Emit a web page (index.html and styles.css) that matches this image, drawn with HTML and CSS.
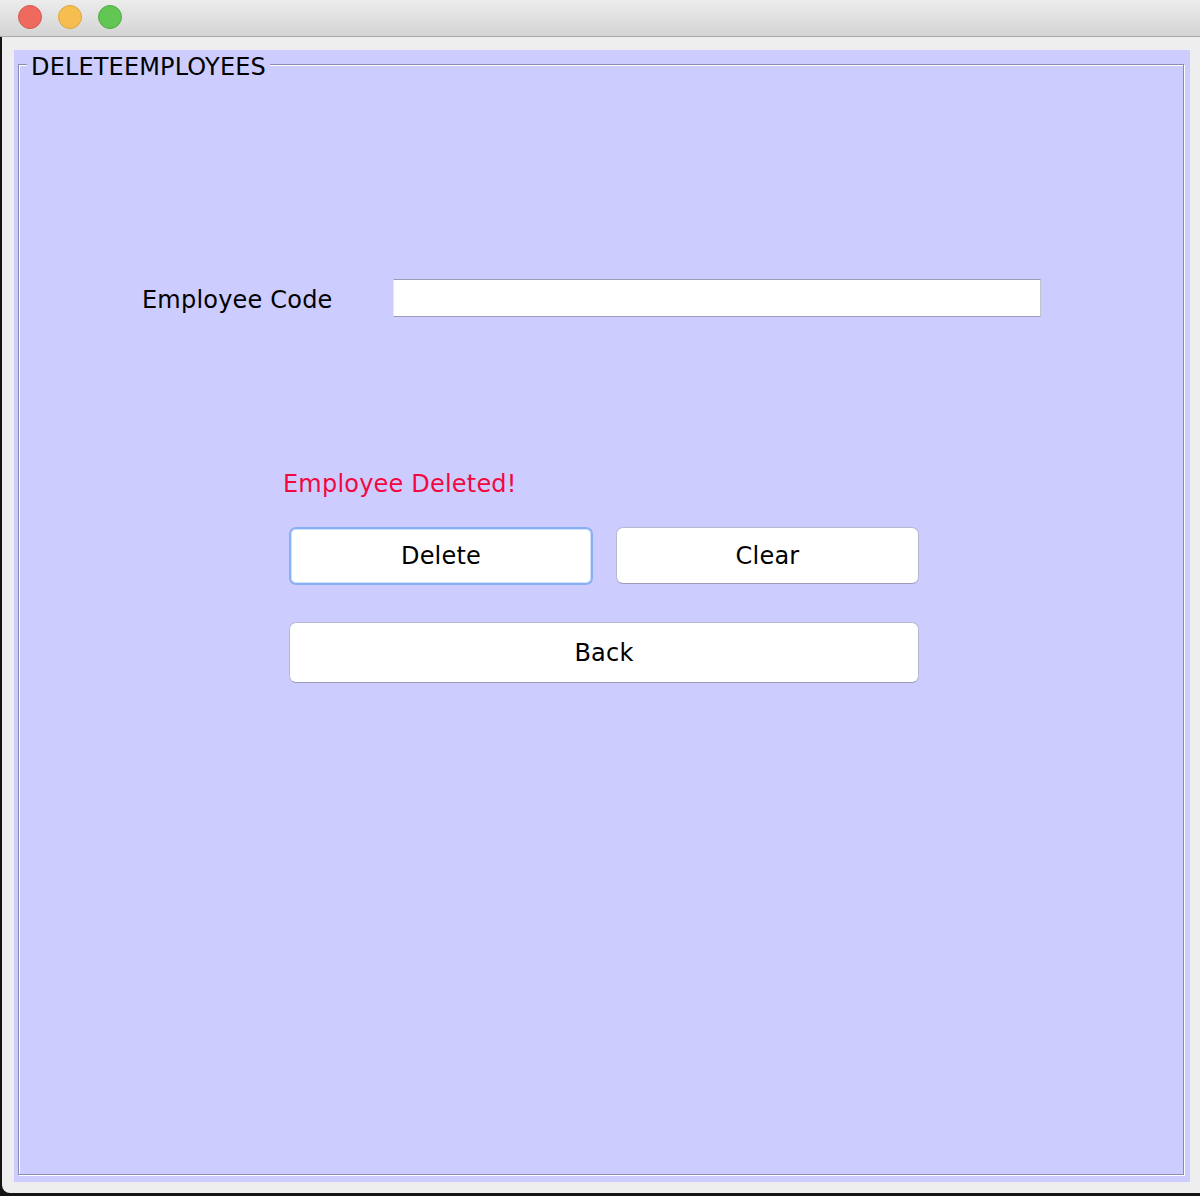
FILE: index.html
```html
<!DOCTYPE html>
<html lang="en">
<head>
<meta charset="utf-8">
<title>Delete Employees</title>
<link rel="stylesheet" href="styles.css">
</head>
<body>
<div class="window">
  <div class="titlebar">
    <span class="light light-red"></span>
    <span class="light light-yellow"></span>
    <span class="light light-green"></span>
  </div>
  <div class="content">
    <div class="panel">
      <fieldset class="group">
        <legend class="group-title">DELETEEMPLOYEES</legend>
        <div class="form">
          <div class="field-row">
            <label class="field-label" for="code">Employee Code</label>
            <input class="field-input" id="code" type="text">
          </div>
          <div class="actions">
            <p class="status">Employee Deleted!</p>
            <div class="btn-row">
              <button class="btn btn-focus" type="button">Delete</button>
              <button class="btn" type="button">Clear</button>
            </div>
            <button class="btn btn-wide" type="button">Back</button>
          </div>
        </div>
      </fieldset>
    </div>
  </div>
</div>
</body>
</html>
```

FILE: styles.css
```css
html, body {
  margin: 0;
  padding: 0;
}

body {
  background: #141414;
  font-family: "DejaVu Sans", "Noto Sans", sans-serif;
  color: #000;
  width: 1200px;
  height: 1196px;
  overflow: hidden;
}

.window {
  width: 1200px;
  height: 1193px;
  display: flex;
  flex-direction: column;
}

.titlebar {
  height: 37px;
  box-sizing: border-box;
  border-bottom: 1px solid #a9a9a9;
  background: linear-gradient(#ececec, #d4d4d4);
  display: flex;
  align-items: center;
  gap: 16px;
  padding-left: 18px;
  padding-bottom: 3px;
}

.light {
  width: 24px;
  height: 24px;
  border-radius: 50%;
  box-sizing: border-box;
}

.light-red { background: #ee6a5f; border: 1px solid #d55a4f; }
.light-yellow { background: #f6be50; border: 1px solid #dca640; }
.light-green { background: #62c655; border: 1px solid #51ab46; }

.content {
  flex: 1;
  margin-left: 2px;
  background: #eeeeee;
  border-bottom-left-radius: 8px;
  padding: 13px 10px 11px 12px;
  display: flex;
  flex-direction: column;
}

.panel {
  flex: 1;
  background: #ccccff;
  padding: 2px 6px 7px 4px;
  display: flex;
  flex-direction: column;
}

.group {
  flex: 1;
  margin: 0;
  padding: 0;
  min-width: 0;
  border: 1px solid #8a8ab2;
  box-shadow: inset 1px 1px 0 #ffffff, 1px 1px 0 #ffffff;
}

.group-title {
  margin-left: 8px;
  padding: 5px 4px 0;
  line-height: 20px;
  font-size: 24px;
  letter-spacing: 0.15px;
  background: #ccccff;
}

.form {
  padding-left: 123px;
  padding-top: 202px;
}

.field-row {
  display: flex;
  align-items: flex-start;
}

.field-label {
  width: 251px;
  padding-top: 2px;
  font-size: 24px;
  letter-spacing: 0.2px;
  line-height: 38px;
}

.field-input {
  width: 648px;
  height: 38px;
  box-sizing: border-box;
  margin: 0;
  padding: 0 6px;
  background: #ffffff;
  border: 1px solid #9c9cb4;
  border-left-color: #e6e6ee;
  border-right-color: #c4c4cc;
  font-family: inherit;
  font-size: 20px;
  outline: none;
}

.actions {
  margin-left: 141px;
  margin-top: 151px;
}

.status {
  margin: 0;
  font-size: 24px;
  letter-spacing: 0.2px;
  line-height: 28px;
  color: #f2083f;
}

.btn-row {
  margin-top: 29px;
  margin-left: 6px;
  display: grid;
  grid-template-columns: 304px 303px;
  column-gap: 23px;
  align-items: start;
}

.btn {
  height: 57px;
  margin: 0;
  padding: 0;
  box-sizing: border-box;
  background: #ffffff;
  border: 1px solid #b8b8d2;
  border-bottom-color: #9a9abb;
  border-radius: 7px;
  font-family: inherit;
  font-size: 24px;
  letter-spacing: 0.2px;
  color: #000;
}

.btn-focus {
  height: 58px;
  border: 2px solid #88b0f2;
  box-shadow: inset 0 0 0 1px #d3e2fb;
}

.btn-wide {
  display: block;
  margin-top: 37px;
  margin-left: 6px;
  width: 630px;
  height: 61px;
}
```
